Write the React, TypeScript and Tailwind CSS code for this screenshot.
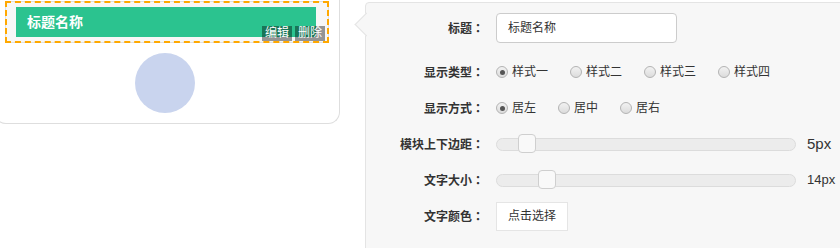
import React from 'react';

const font = { fontFamily: '"Liberation Sans", "Noto Sans CJK SC", sans-serif' };

function Radio({ label, checked }: { label: string; checked?: boolean }) {
  return (
    <label className="mr-[22px] flex items-center text-[12px] text-[#333]">
      <span className="flex h-[12px] w-[12px] items-center justify-center rounded-full border border-[#b3b3b3] bg-gradient-to-b from-[#f2f2f2] to-[#dcdcdc]">
        {checked && <span className="h-[5px] w-[5px] rounded-full bg-[#555]" />}
      </span>
      <span className="ml-[4px]">{label}</span>
    </label>
  );
}

function Slider({ offset, value, big }: { offset: number; value: string; big?: boolean }) {
  return (
    <div className="flex items-center">
      <div className="relative h-[13px] w-[300px] rounded-full border border-[#dcdcdc] bg-[#ececec]">
        {/* thumb */}
        <div
          className="absolute top-[-5px] h-[19px] w-[18px] rounded-[4px] border border-[#cfcfcf] bg-[#f9f9f9]"
          style={{ left: offset }}
        />
      </div>
      <span className={big ? 'ml-[11px] text-[15px] text-[#333]' : 'ml-[11px] text-[13px] text-[#333]'}>{value}</span>
    </div>
  );
}

function Row({ label, children, first }: { label: string; children: React.ReactNode; first?: boolean }) {
  return (
    <div className={first ? 'mb-[11px] flex h-[30px] items-center' : 'flex h-[36px] items-center'}>
      <div className="w-[118px] text-right text-[12px] font-bold text-[#333]">
        {label}
        <span style={{ fontFamily: '"Noto Sans CJK JP", sans-serif' }}>：</span>
      </div>
      <div className="ml-[12px] flex items-center">{children}</div>
    </div>
  );
}

export default function App() {
  return (
    <div className="flex h-[248px] w-[840px] items-start overflow-hidden bg-white" style={font}>
      {/* Phone preview card */}
      <div className="-ml-[6px] w-[346px] shrink-0 rounded-b-[12px] border-x border-b border-[#dedede] bg-white px-[10px] pt-[1px] pb-[10px]">
        {/* selected block */}
        <div className="relative border border-[#e0e0e0] bg-[#f7f7f7] pt-[5px] pb-[5px] pl-[10px]">
          <div className="flex h-[30px] w-[300px] items-center bg-[#2bc38f] pl-[11px] text-[14px] font-bold text-white">
            标题名称
          </div>
          <div className="pointer-events-none absolute -inset-px border-2 border-dashed border-[#ffa800]" />
          <div className="absolute right-[3px] bottom-[1px] flex gap-[3px]">
            <span className="h-[15px] w-[30px] bg-black/40 text-center text-[12px] leading-[15px] text-white">编辑</span>
            <span className="h-[15px] w-[30px] bg-black/40 text-center text-[12px] leading-[15px] text-white">删除</span>
          </div>
        </div>
        <div className="mt-[10px] ml-[130px] h-[60px] w-[60px] rounded-full bg-[#c9d4ee]" />
      </div>

      {/* Settings panel */}
      <div className="relative mt-[2px] ml-[25px] h-[260px] w-[490px] shrink-0 rounded-tl-[4px] border border-[#e4e4e4] bg-[#f7f7f7] pt-[10px]">
        <div className="absolute top-[13px] left-[-8px] h-[17px] w-[17px] rotate-45 border-b border-l border-[#e4e4e4] bg-[#f7f7f7]" />
        <div className="relative">
          <Row label="标题" first>
            <div className="flex h-[30px] w-[181px] items-center rounded-[4px] border border-[#cccccc] bg-white pl-[11px] text-[12px] text-[#333]">
              标题名称
            </div>
          </Row>
          <Row label="显示类型">
            <Radio label="样式一" checked />
            <Radio label="样式二" />
            <Radio label="样式三" />
            <Radio label="样式四" />
          </Row>
          <Row label="显示方式">
            <Radio label="居左" checked />
            <Radio label="居中" />
            <Radio label="居右" />
          </Row>
          <Row label="模块上下边距">
            <Slider offset={21} value="5px" big />
          </Row>
          <Row label="文字大小">
            <Slider offset={41} value="14px" />
          </Row>
          <Row label="文字颜色">
            <button className="h-[29px] border border-[#e5e5e5] bg-white px-[11px] text-[12px] text-[#333]">
              点击选择
            </button>
          </Row>
        </div>
      </div>
    </div>
  );
}
